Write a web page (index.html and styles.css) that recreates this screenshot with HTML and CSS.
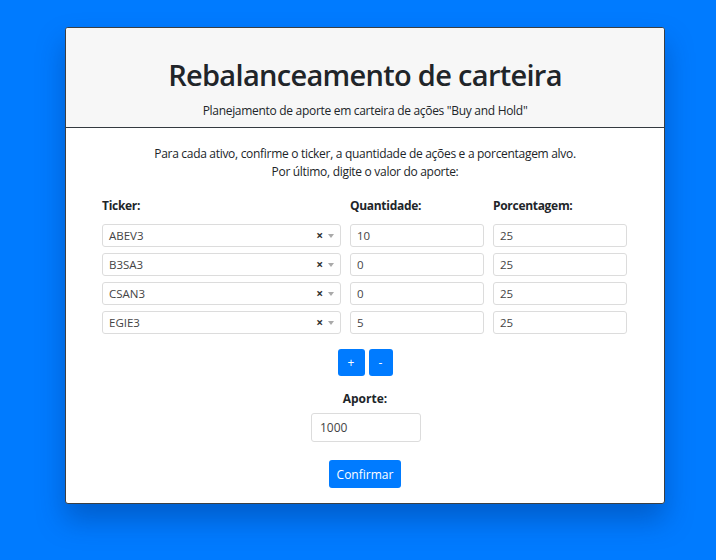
FILE: index.html
```html
<!DOCTYPE html>
<html lang="pt-BR">
<head>
<meta charset="utf-8">
<title>Rebalanceamento de carteira</title>
<link rel="stylesheet" href="styles.css">
</head>
<body>
<div class="page">
  <div class="card">
    <div class="card-header">
      <h1 class="title">Rebalanceamento de carteira</h1>
      <p class="subtitle">Planejamento de aporte em carteira de ações "Buy and Hold"</p>
    </div>
    <div class="card-body">
      <p class="intro">Para cada ativo, confirme o ticker, a quantidade de ações e a porcentagem alvo.<br>Por último, digite o valor do aporte:</p>
      <div class="grid">
        <div class="label">Ticker:</div>
        <div class="label">Quantidade:</div>
        <div class="label">Porcentagem:</div>

        <div class="select"><span class="sel-val">ABEV3</span><span class="sel-x">×</span><span class="sel-arrow"></span></div>
        <div class="input">10</div>
        <div class="input">25</div>

        <div class="select"><span class="sel-val">B3SA3</span><span class="sel-x">×</span><span class="sel-arrow"></span></div>
        <div class="input">0</div>
        <div class="input">25</div>

        <div class="select"><span class="sel-val">CSAN3</span><span class="sel-x">×</span><span class="sel-arrow"></span></div>
        <div class="input">0</div>
        <div class="input">25</div>

        <div class="select"><span class="sel-val">EGIE3</span><span class="sel-x">×</span><span class="sel-arrow"></span></div>
        <div class="input">5</div>
        <div class="input">25</div>
      </div>
      <div class="btn-row">
        <button class="btn btn-sm btn-plus">+</button>
        <button class="btn btn-sm btn-minus">-</button>
      </div>
      <div class="aporte-label">Aporte:</div>
      <div class="aporte-input">1000</div>
      <div class="confirm-row">
        <button class="btn btn-confirm">Confirmar</button>
      </div>
    </div>
  </div>
</div>
</body>
</html>
```

FILE: styles.css
```css
html, body {
  margin: 0;
  padding: 0;
  background: #007bff;
  font-family: "Open Sans", "Noto Sans", sans-serif;
  color: #212529;
}
.page {
  width: 716px;
  height: 560px;
  padding-top: 27px;
  box-sizing: border-box;
}
.card {
  margin-left: 65px;
  width: 600px;
  height: 477px;
  box-sizing: border-box;
  border: 1px solid #3a3f44;
  border-radius: 3px;
  background: #fff;
  overflow: hidden;
  box-shadow: 0 16px 28px rgba(0, 40, 110, 0.35);
}
.card-header {
  background: #f7f7f7;
  border-bottom: 1px solid #343a40;
  height: 100px;
  box-sizing: border-box;
  padding-top: 28px;
  text-align: center;
}
.title {
  margin: 0;
  font-size: 29px;
  font-weight: 600;
  line-height: 38px;
  letter-spacing: -0.7px;
}
.subtitle {
  margin: 9px 0 0;
  font-size: 12px;
  line-height: 16px;
  letter-spacing: -0.3px;
}
.card-body {
  padding: 17px 36px 0 36px;
}
.intro {
  margin: 0;
  text-align: center;
  font-size: 12px;
  line-height: 18px;
  letter-spacing: -0.3px;
}
.grid {
  display: grid;
  grid-template-columns: 239px 134px 134px;
  column-gap: 9px;
  row-gap: 6px;
  margin-top: 16px;
}
.label {
  font-weight: 700;
  font-size: 12px;
  line-height: 18px;
  margin-bottom: 3px;
  letter-spacing: -0.3px;
}
.select, .input {
  height: 23px;
  box-sizing: border-box;
  border: 1px solid #dcdcdc;
  border-radius: 3px;
  font-size: 11.5px;
  color: #444;
  display: flex;
  align-items: center;
  padding-left: 6px;
}
.select {
  padding-right: 6px;
}
.sel-val {
  flex: 1;
}
.sel-x {
  font-size: 12px;
  font-weight: 700;
  color: #333;
  margin-right: 5px;
  line-height: 1;
}
.sel-arrow {
  width: 0;
  height: 0;
  border-left: 3px solid transparent;
  border-right: 3px solid transparent;
  border-top: 4px solid #aaa;
}
.btn-row {
  display: flex;
  justify-content: center;
  gap: 4px;
  margin-top: 15px;
}
.btn {
  background: #007bff;
  color: #fff;
  border: none;
  border-radius: 3px;
  font-family: inherit;
  padding: 0;
}
.btn-sm {
  height: 27px;
  font-size: 12px;
}
.btn-plus { width: 27px; }
.btn-minus { width: 24px; }
.aporte-label {
  text-align: center;
  font-weight: 700;
  font-size: 12px;
  line-height: 18px;
  margin-top: 14px;
}
.aporte-input {
  width: 110px;
  height: 29px;
  box-sizing: border-box;
  margin: 5px auto 0;
  border: 1px solid #dcdcdc;
  border-radius: 3px;
  font-size: 12px;
  color: #444;
  display: flex;
  align-items: center;
  padding-left: 8px;
  margin-left: 209px;
}
.confirm-row {
  display: flex;
  justify-content: center;
  margin-top: 18px;
}
.btn-confirm {
  width: 72px;
  height: 28px;
  font-size: 12px;
}
```
